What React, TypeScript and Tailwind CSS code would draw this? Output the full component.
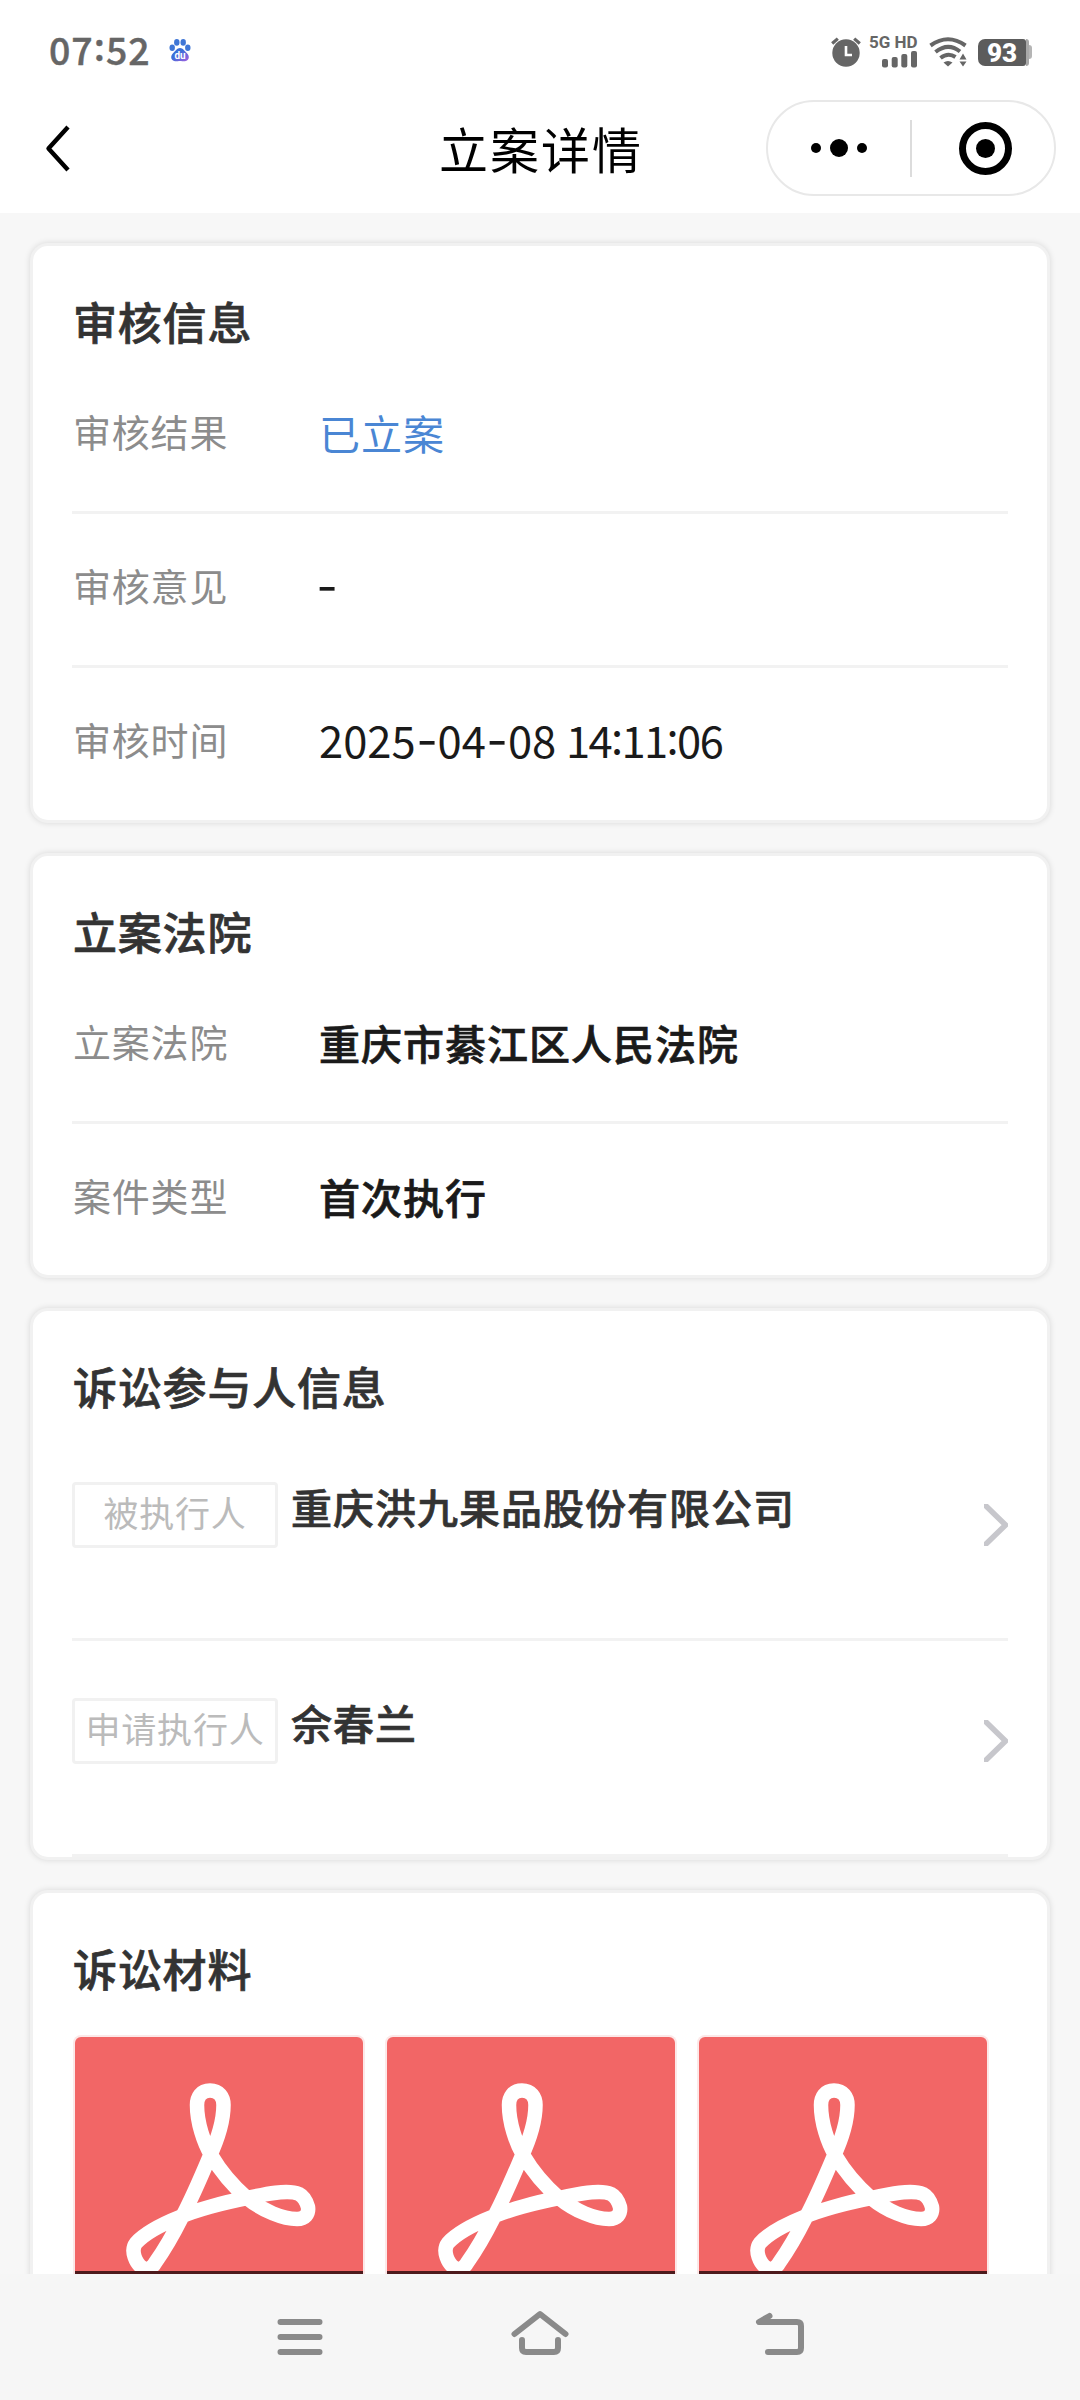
import type { ReactNode } from 'react';

const materials = [1, 2, 3];

const parties = [
  { role: '被执行人', name: '重庆洪九果品股份有限公司' },
  { role: '申请执行人', name: '佘春兰' },
];

// 百度通知图标
function PawIcon() {
  return (
    <svg width="22" height="24" viewBox="0 0 22 24">
      <defs>
        <linearGradient id="paw" x1="0" y1="0" x2="1" y2="1">
          <stop offset="0.4" stopColor="#3b6fd8" />
          <stop offset="1" stopColor="#a45fe0" />
        </linearGradient>
      </defs>
      <ellipse cx="7.800" cy="4.400" rx="2.700" ry="3.300" fill="#3f76d6" />
      <ellipse cx="14.200" cy="4.400" rx="2.700" ry="3.300" fill="#3f76d6" />
      <ellipse cx="3.200" cy="9.800" rx="2.700" ry="3.200" fill="#3f76d6" />
      <ellipse cx="18.800" cy="9.800" rx="2.700" ry="3.200" fill="#3f76d6" />
      <path d="M11 10c3 0 4.500 3 6.500 4.800 3.500 3 3 8-1.500 8.400-2 .2-3-.2-5-.2s-3 .4-5 .2C1.500 22.800 1 17.800 4.500 14.800 6.500 13 8 10 11 10z" fill="url(#paw)" />
      <text x="11" y="21" textAnchor="middle" fontSize="10" fontWeight="700" fill="#fff" fontFamily="Roboto, sans-serif">du</text>
    </svg>
  );
}

function AlarmIcon() {
  return (
    <svg width="30" height="30" viewBox="0 0 30 30">
      <circle cx="15" cy="16" r="13.700" fill="#666" />
      <path d="M1.200 6.500L6.800 1.600M28.800 6.500L23.200 1.600" stroke="#666" strokeWidth="3.200" />
      <path d="M15 9v9h6" fill="none" stroke="#fff" strokeWidth="2.600" />
    </svg>
  );
}

function SignalIcon() {
  return (
    <svg width="36" height="18" viewBox="0 0 36 18">
      <rect x="0" y="9" width="6" height="8.500" rx="2" fill="#666" />
      <rect x="9.700" y="7" width="6" height="10.500" rx="2" fill="#666" />
      <rect x="19.300" y="4" width="6" height="13.500" rx="2" fill="#666" />
      <rect x="29" y="1" width="6" height="16.500" rx="2" fill="#666" />
    </svg>
  );
}

function WifiIcon() {
  return (
    <svg width="38" height="30" viewBox="0 0 38 30">
      <g fill="none" stroke="#666" strokeWidth="4">
        <path d="M1.500 8.500Q19-4 36.500 8.500" />
        <path d="M6.500 15Q19 5 31 14.500" />
        <path d="M11.500 21Q19 15 26.500 20" />
      </g>
      <path d="M14.500 25.500Q19 22.500 23.500 25.500L19 29.500z" fill="#666" />
      <path d="M30.500 22.500l3.500-6 3.500 6zM30.500 24.500h7L34 29.500z" fill="#666" />
    </svg>
  );
}

function PdfLogo() {
  return (
    <svg width="288" height="237" viewBox="0 0 288 237">
      <path
        d="M135 53.500C126 53.500 122 60 122 68C122 86 129 106 136 118C146 135 158 149 172 161C188 174 208 182 222 182C230 182 234 177 233 170C231 163 228 159 224 157C213 152 190 157 172 161C150 165 118 174 105 180C85 188 70 196 61 206C55 214 61 227 68 231C72 234 78 230 80 226C90 212 100 194 107 180C116 163 126 140 134 121C142 104 148.500 86 148.500 68C148.500 60 144 53.500 135 53.500Z"
        fill="none"
        stroke="#fff"
        strokeWidth="14.500"
        strokeLinejoin="round"
      />
    </svg>
  );
}

// 连字符加宽，并与数字垂直居中
function Hyphen() {
  return <span className="inline-block w-[22px] -translate-y-[3px] scale-x-130 text-center font-medium">-</span>;
}

function Colon() {
  return <span className="inline-block -translate-y-[4px]">:</span>;
}

function Card({ title, className, children }: { title: string; className: string; children: ReactNode }) {
  return (
    <section className={`${className} shrink-0 rounded-[18px] border-[3px] border-[#f1f1f1] bg-white px-[39px] shadow-[0_0_6px_rgba(0,0,0,0.13)]`}>
      <h2 className="flex h-[114px] items-center pt-[36px] pb-[1px] pl-[1px] text-[44px] leading-[74px] font-medium tracking-[0.8px] text-[#333] [-webkit-text-stroke:0.7px_currentColor]">
        {title}
      </h2>
      {children}
    </section>
  );
}

function Row({ label, last, children }: { label: string; last?: boolean; children: ReactNode }) {
  return (
    <div className={last ? 'flex h-[151px]' : 'flex h-[154px] border-b-[3px] border-[#f2f2f2]'}>
      <span className="w-[246px] pt-[40.500px] pl-[1px] text-[38px] leading-[60px] tracking-[0.8px] text-[#8c8c8c]">{label}</span>
      <span className="pt-[42px] pl-[1px] leading-[60px]">{children}</span>
    </div>
  );
}

export default function App() {
  return (
    <div className="flex h-[2400px] w-[1080px] flex-col overflow-hidden bg-[#f7f7f7] font-['Noto_Sans_CJK_SC',sans-serif]">
      {/* 顶部状态栏和导航栏 */}
      <header className="h-[213px] shrink-0 bg-white">
        <div className="flex h-[100px] items-center justify-between px-[48px]">
          <div className="flex items-center">
            <span className="w-[121px] pb-[2px] pl-[1px] text-[37.500px] leading-[50px] font-medium tracking-[1px] text-[#666] [-webkit-text-stroke:0.4px_currentColor]">
              07<Colon />52
            </span>
            <PawIcon />
          </div>
          <div className="flex items-center pt-[3px]">
            <AlarmIcon />
            <div className="ml-[8px] flex w-[49px] flex-col items-end">
              <span className="w-[49px] font-[Roboto,sans-serif] text-[17px] leading-[15px] font-bold whitespace-nowrap text-[#666]">5G HD</span>
              <SignalIcon />
            </div>
            <div className="ml-[11px]">
              <WifiIcon />
            </div>
            <div className="ml-[11px] flex items-center pt-[1px]">
              <div className="flex h-[27px] w-[48px] items-center justify-center rounded-l-[7px] rounded-r-[3px] bg-[#5c5c5c] pt-[1px] font-[Roboto,sans-serif] text-[26px] leading-[26px] font-black text-white">93</div>
              <div className="h-[27px] w-[3px] rounded-r-[4px] bg-[#a8a8a8]" />
              <div className="h-[14px] w-[3px] rounded-r-[3px] bg-[#b5b5b5]" />
            </div>
          </div>
        </div>

        <div className="flex h-[96px] items-center pr-[24px] pl-[44px]">
          <svg width="28" height="50" viewBox="0 0 28 50" className="shrink-0">
            <path d="M24 4L4.500 25.500L24 47" fill="none" stroke="#000" strokeWidth="4.400" strokeLinejoin="round" />
          </svg>
          <h1 className="ml-[367px] w-[327px] text-[49px] leading-[60px] tracking-[2px] text-black">立案详情</h1>
          <div className="flex h-[96px] w-[290px] items-center rounded-full border-2 border-[#e8e8e8]">
            <div className="flex w-[142px] items-center justify-center gap-[9px] pr-[1px]">
              <i className="size-[10px] rounded-full bg-black" />
              <i className="size-[18px] rounded-full bg-black" />
              <i className="size-[10px] rounded-full bg-black" />
            </div>
            <div className="h-[57px] w-[2px] bg-[#dcdcdc]" />
            <div className="ml-[47px] flex size-[53px] items-center justify-center rounded-full border-[7px] border-black">
              <i className="size-[19px] rounded-full bg-black" />
            </div>
          </div>
        </div>
      </header>

      {/* 页面内容 */}
      <main className="flex h-[2061px] flex-col gap-[30px] overflow-hidden px-[30px] pt-[30px]">
        <Card title="审核信息" className="h-[580px]">
          <Row label="审核结果">
            <span className="text-[41px] tracking-[1px] text-[#4a86d4]">已立案</span>
          </Row>
          <Row label="审核意见">
            <span className="-ml-[3px] text-[43.500px] text-[#1a1a1a]"><Hyphen /></span>
          </Row>
          <Row label="审核时间" last>
            <span className="text-[43.500px] text-[#1a1a1a]">
              2025<Hyphen />04<Hyphen />08 <span className="tracking-[-1.600px]">14<Colon />11<Colon />06</span>
            </span>
          </Row>
        </Card>

        <Card title="立案法院" className="h-[425px]">
          <Row label="立案法院">
            <span className="text-[41px] font-medium tracking-[1px] text-[#1a1a1a] [-webkit-text-stroke:0.7px_currentColor]">重庆市綦江区人民法院</span>
          </Row>
          <Row label="案件类型" last>
            <span className="text-[41px] font-medium tracking-[1px] text-[#1a1a1a] [-webkit-text-stroke:0.7px_currentColor]">首次执行</span>
          </Row>
        </Card>

        <Card title="诉讼参与人信息" className="h-[552px]">
          {parties.map((p) => (
            <div key={p.name} className="flex h-[216px] items-start border-b-[3px] border-[#f2f2f2]">
              <span className="mt-[57px] flex h-[66px] w-[206px] justify-center rounded-[4px] border-[3px] border-[#f1f1f1] text-[35px] leading-[53px] tracking-[0.800px] text-[#bbb]">
                {p.role}
              </span>
              <span className="mt-[51px] ml-[12px] pl-[1px] text-[41px] leading-[60px] font-medium tracking-[1px] text-[#333] [-webkit-text-stroke:0.7px_currentColor]">{p.name}</span>
              <svg width="24" height="42" viewBox="0 0 24 42" className="mt-[79px] ml-auto">
                <path d="M2 2L21.500 21L2 40" fill="none" stroke="#c7c7cc" strokeWidth="5.500" strokeLinecap="round" />
              </svg>
            </div>
          ))}
        </Card>

        <Card title="诉讼材料" className="h-[700px]">
          <div className="mt-[30px] ml-[3px] flex gap-[24px]">
            {materials.map((m) => (
              <div key={m} className="h-[288px] w-[288px] rounded-t-[6px] bg-[#f26666] shadow-[0_0_0_2px_#fce8e8]">
                <div className="h-[234px] overflow-hidden">
                  <PdfLogo />
                </div>
                <div className="h-[54px] bg-[#4d1a1c]" />
              </div>
            ))}
          </div>
        </Card>
      </main>

      {/* 系统导航键 */}
      <nav className="flex h-[126px] shrink-0 justify-center bg-[#f6f6f6] pt-[33px]">
        <div className="flex w-[240px] justify-center">
          <svg width="60" height="60" viewBox="0 0 60 60" fill="none" stroke="#8a8a8a" strokeWidth="6" strokeLinecap="round">
            <path d="M10.500 15H49.500M10.500 30H49.500M10.500 45H49.500" />
          </svg>
        </div>
        <div className="flex w-[240px] justify-center">
          <svg width="60" height="60" viewBox="0 0 60 60" fill="none" stroke="#8a8a8a" strokeWidth="6" strokeLinecap="round" strokeLinejoin="round">
            <path d="M4.500 27L30 7L55.500 27M12 33V41Q12 45 16 45H44Q48 45 48 41V33" />
          </svg>
        </div>
        <div className="flex w-[240px] justify-center">
          <svg width="60" height="60" viewBox="0 0 60 60" fill="none" stroke="#8a8a8a" strokeWidth="6" strokeLinecap="round" strokeLinejoin="round">
            <path d="M19.500 9L9 15H47Q51 15 51 19V41Q51 45 47 45H18" />
          </svg>
        </div>
      </nav>
    </div>
  );
}
